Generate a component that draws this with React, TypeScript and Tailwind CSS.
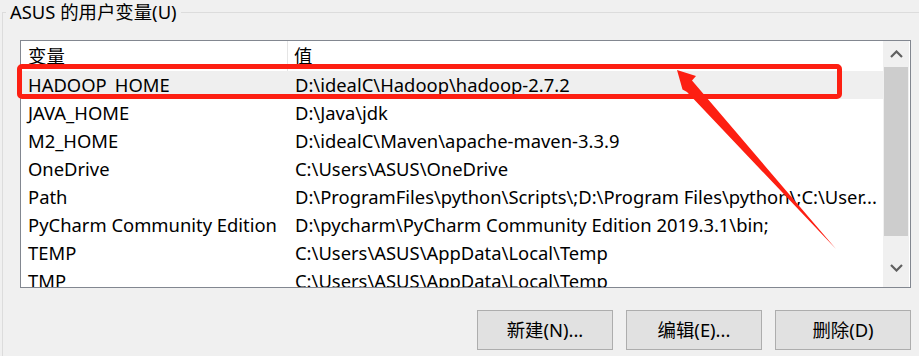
import React from 'react';

const rows: [string, string][] = [
  ['HADOOP_HOME', 'D:\\idealC\\Hadoop\\hadoop-2.7.2'],
  ['JAVA_HOME', 'D:\\Java\\jdk'],
  ['M2_HOME', 'D:\\idealC\\Maven\\apache-maven-3.3.9'],
  ['OneDrive', 'C:\\Users\\ASUS\\OneDrive'],
  ['Path', 'D:\\ProgramFiles\\python\\Scripts\\;D:\\Program Files\\python\\;C:\\User...'],
  ['PyCharm Community Edition', 'D:\\pycharm\\PyCharm Community Edition 2019.3.1\\bin;'],
  ['TEMP', 'C:\\Users\\ASUS\\AppData\\Local\\Temp'],
  ['TMP', 'C:\\Users\\ASUS\\AppData\\Local\\Temp'],
];

const Chevron: React.FC<{ up?: boolean }> = ({ up }) => (
  <svg width="13" height="8" viewBox="0 0 13 8">
    <path
      d={up ? 'M1 7 L6.5 1.5 L12 7' : 'M1 1 L6.5 6.5 L12 1'}
      fill="none"
      stroke="#606060"
      strokeWidth="2.2"
    />
  </svg>
);

export default function App() {
  return (
    <div
      className="relative w-[919px] h-[356px] overflow-hidden bg-[#f0f0f0] text-black text-[18.4px]"
      style={{ fontFamily: '"Noto Sans", "Noto Sans CJK SC", sans-serif' }}
    >
      {/* group box */}
      <div className="relative ml-[2px] mt-[12px] h-[344px] border-l border-t border-[#dcdcdc]">
        <div className="absolute left-[3px] top-[-14px] bg-[#f0f0f0] px-[4px] leading-[26px]">
          ASUS 的用户变量(U)
        </div>

        <div className="pl-[17px] pt-[27px]">
          {/* list */}
          <div className="flex w-[891px] h-[248px] border border-[#828790] bg-white">
            <div className="w-[862px] overflow-hidden">
              <div className="flex h-[30px] items-center">
                <div className="w-[267px] shrink-0 h-full flex items-center pl-[7px] border-r border-[#e5e5e5]">变量</div>
                <div className="pl-[6px]">值</div>
              </div>
              {rows.map(([name, value], i) => (
                <div
                  key={name}
                  className={`flex h-[28px] items-center whitespace-nowrap ${i === 0 ? 'bg-[#efefef]' : ''}`}
                >
                  <div className="w-[267px] shrink-0 pl-[7px]">{name}</div>
                  <div className="pl-[7px]">{value}</div>
                </div>
              ))}
            </div>
            {/* scrollbar */}
            <div className="w-[26px] flex flex-col bg-[#f0f0f0]">
              <div className="h-[26px] flex items-center justify-center pl-[1px]">
                <Chevron up />
              </div>
              <div className="mx-[1px] h-[169px] bg-[#cdcdcd]" />
              <div className="flex-1 flex items-center justify-center pl-[1px] pt-[12px]">
                <Chevron />
              </div>
            </div>
            <div className="w-[1px]" />
          </div>

          {/* buttons */}
          <div className="flex gap-[13px] ml-[457px] mt-[22px]">
            {['新建(N)...', '编辑(E)...', '删除(D)'].map((b) => (
              <button
                key={b}
                className="w-[136px] h-[40px] border border-[#adadad] bg-[#e1e1e1] text-[18.4px] leading-none"
              >
                {b}
              </button>
            ))}
          </div>
        </div>
      </div>

      {/* annotation: red box and arrow */}
      <div className="absolute left-[17px] top-[64px] w-[825px] h-[35px] border-[5px] border-[#fd1f12] rounded-[5px]" />
      <svg className="absolute left-0 top-0" width="919" height="356" viewBox="0 0 919 356">
        <polygon
          points="677,70 696,76 692,80.5 836,249 687,92 682.5,89.5"
          fill="#fd1f12"
        />
      </svg>
    </div>
  );
}
